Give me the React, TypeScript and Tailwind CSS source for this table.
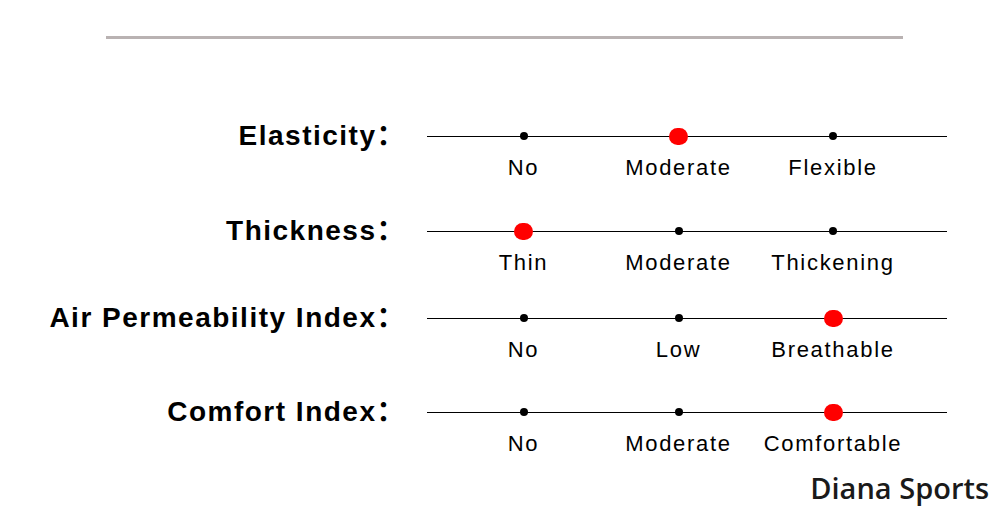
const rows = [
  { label: 'Elasticity：', options: ['No', 'Moderate', 'Flexible'], active: 1, mt: 'mt-[87px]' },
  { label: 'Thickness：', options: ['Thin', 'Moderate', 'Thickening'], active: 0, mt: 'mt-[42px]' },
  { label: 'Air Permeability Index：', options: ['No', 'Low', 'Breathable'], active: 2, mt: 'mt-[34px]' },
  { label: 'Comfort Index：', options: ['No', 'Moderate', 'Comfortable'], active: 2, mt: 'mt-[41px]' },
]

function Scale({ row }: { row: (typeof rows)[number] }) {
  return (
    <div className={`flex flex-col ${row.mt}`}>
      <div className="flex h-[20px] items-center">
        <div className="w-[406px] shrink-0 whitespace-nowrap text-right text-[28px] font-bold leading-none tracking-[1.5px] text-black">
          {row.label}
        </div>
        <div className="ml-[21px] grid h-full w-[520px] grid-cols-[155px_155px_154px] bg-[linear-gradient(#000,#000)] bg-[length:100%_1px] bg-center bg-no-repeat pl-[19px]">
          {row.options.map((opt, i) => (
            <div key={opt} className="flex items-center justify-center">
              {i === row.active ? (
                <span className="h-[17px] w-[19px] rounded-full bg-[#f00]" />
              ) : (
                <span className="h-[8px] w-[8px] rounded-full bg-black" />
              )}
            </div>
          ))}
        </div>
      </div>
      <div className="ml-[427px] mt-[11px] grid w-[520px] grid-cols-[155px_155px_154px] pl-[19px]">
        {row.options.map((opt) => (
          <div key={opt} className="whitespace-nowrap text-center text-[22px] leading-none tracking-[1.7px] text-black">
            {opt}
          </div>
        ))}
      </div>
    </div>
  )
}

export default function App() {
  return (
    <div
      className="h-[514px] w-[1000px] overflow-hidden bg-white pt-[36px]"
      style={{ fontFamily: '"Liberation Sans", "Noto Sans CJK SC", Arial, sans-serif' }}
    >
      {/* Top divider */}
      <div className="ml-[106px] h-[3px] w-[797px] bg-[#b9b2b2]" />

      {rows.map((row) => (
        <Scale key={row.label} row={row} />
      ))}

      {/* Brand */}
      <div className="mt-[18px] pr-[11px] text-right text-[29px] font-semibold leading-none text-[#1a1a1a] [font-family:'Open_Sans',sans-serif]">
        Diana Sports
      </div>
    </div>
  )
}
